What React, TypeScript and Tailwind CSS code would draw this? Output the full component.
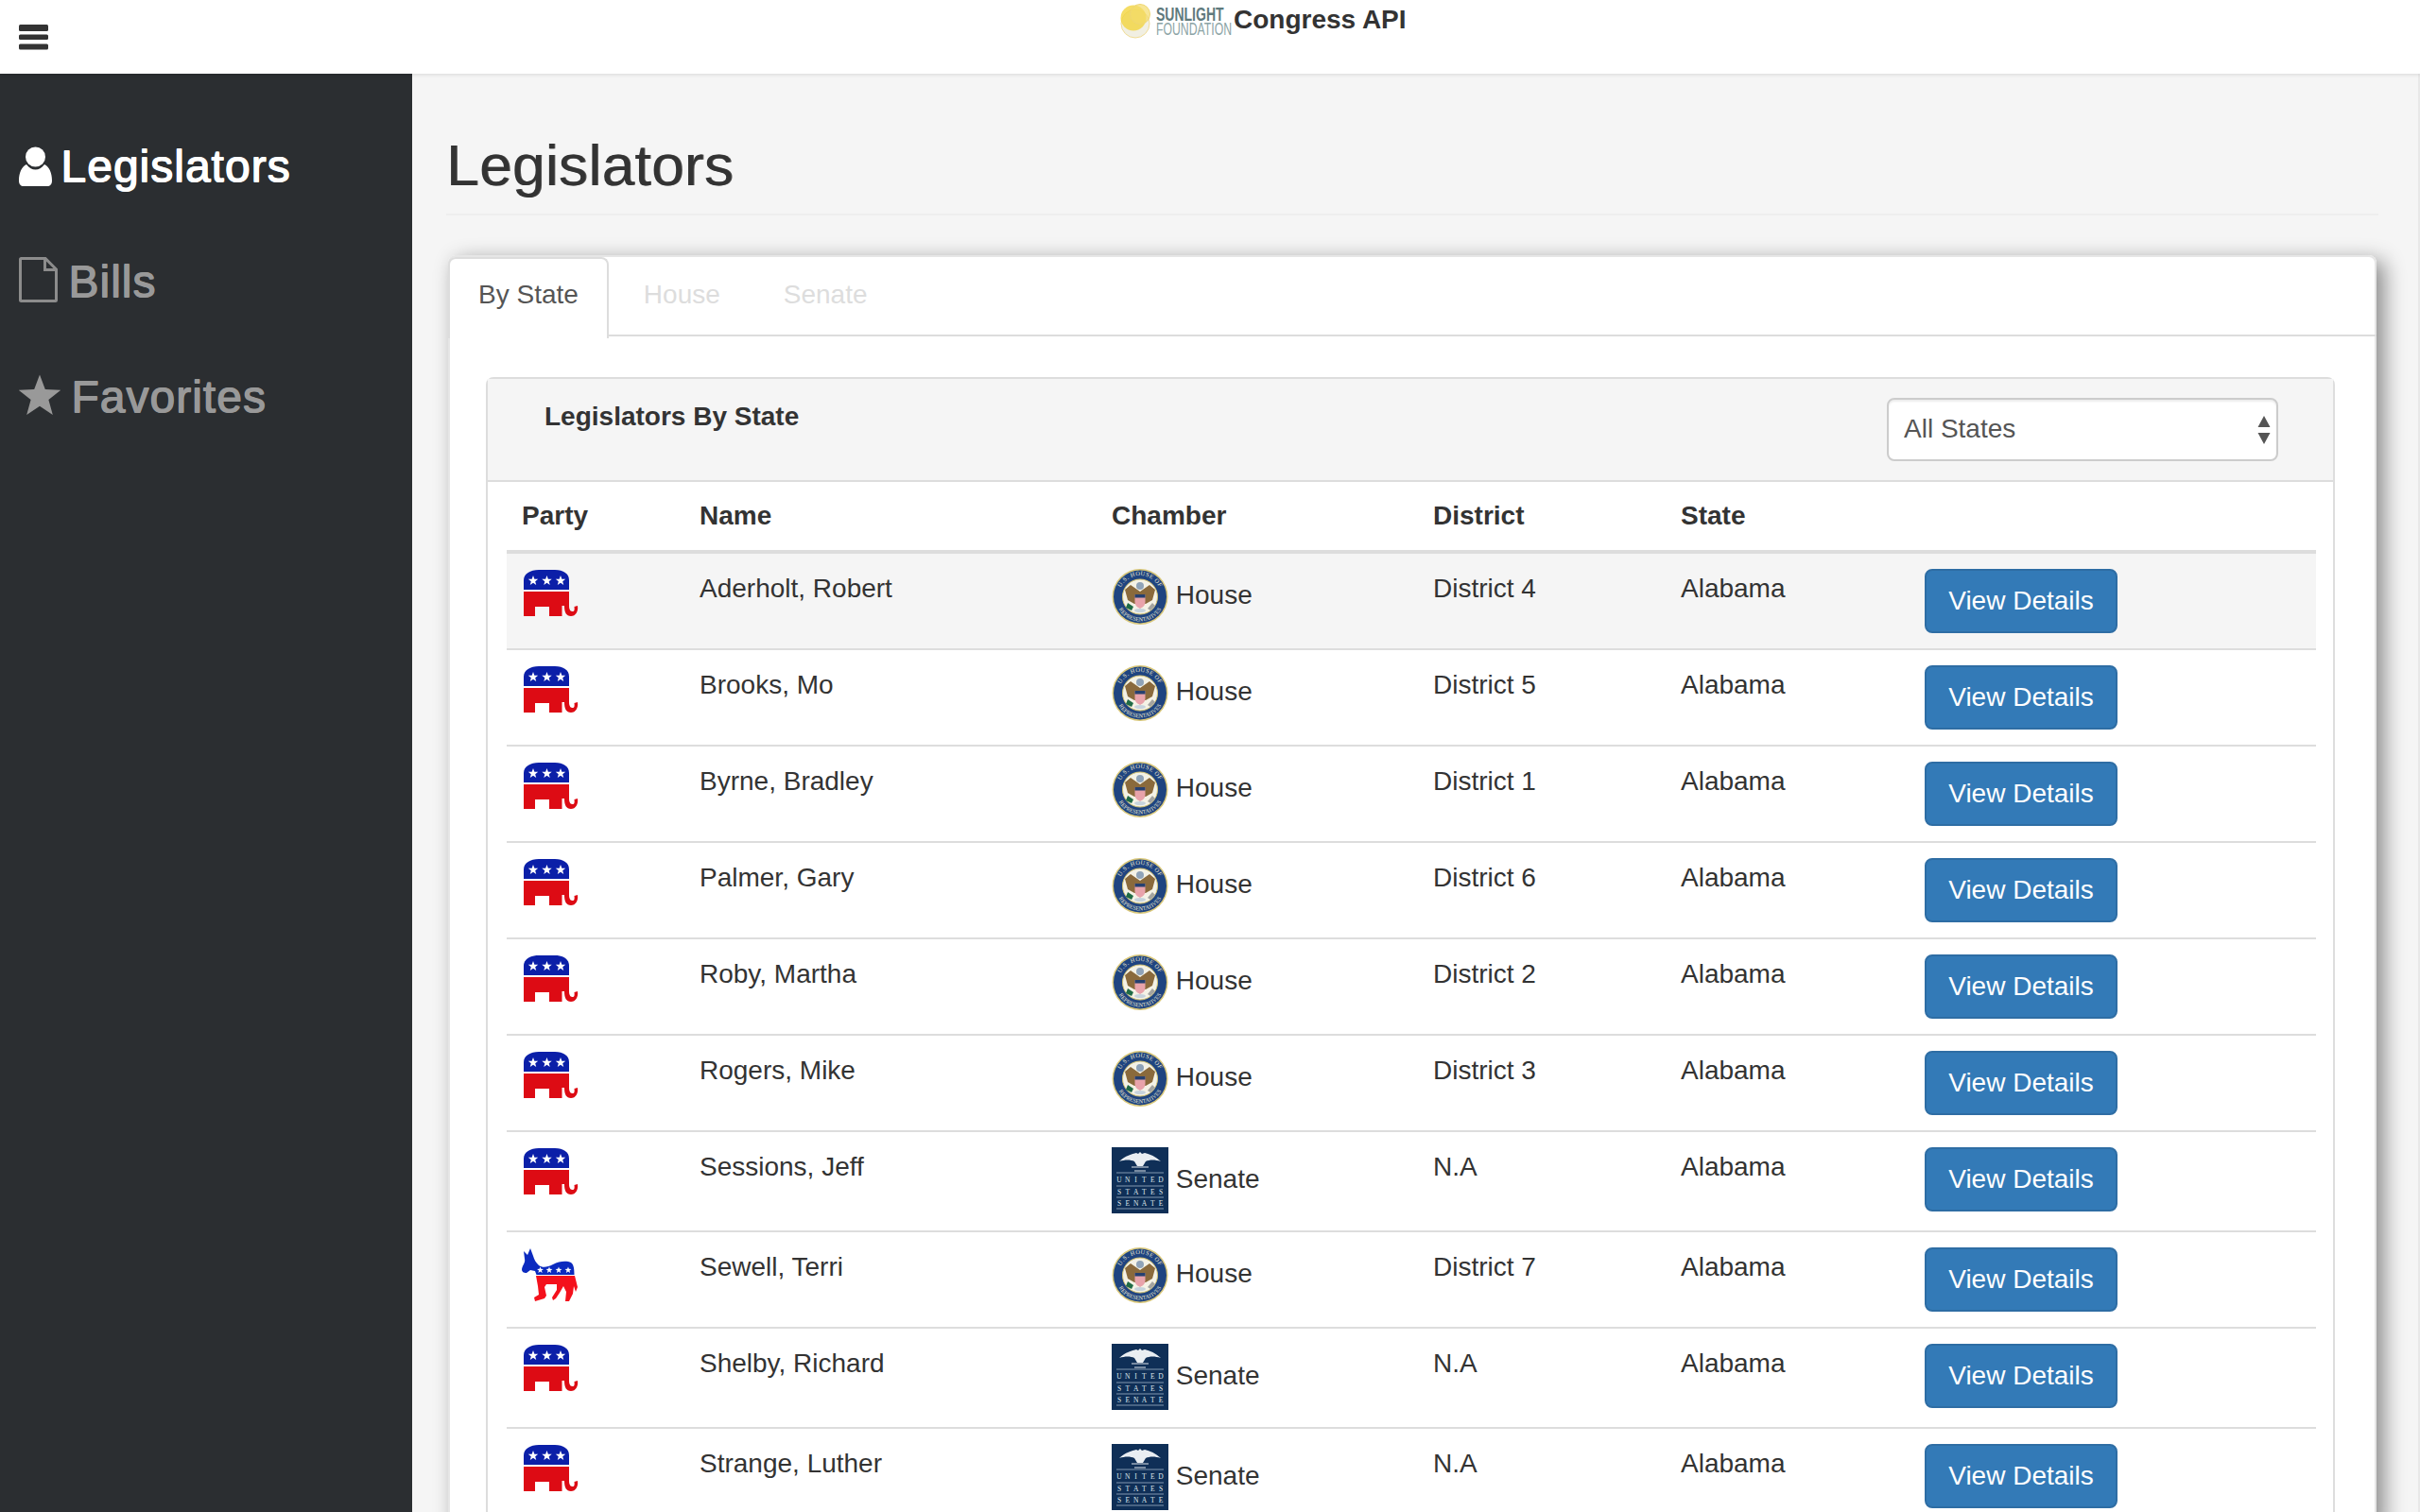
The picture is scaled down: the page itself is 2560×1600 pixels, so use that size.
import React from 'react';

type Party = 'R' | 'D';
type Chamber = 'House' | 'Senate';
type Legislator = { party: Party; name: string; chamber: Chamber; district: string };

const LEGISLATORS: Legislator[] = [
  { party: 'R', name: 'Aderholt, Robert', chamber: 'House', district: 'District 4' },
  { party: 'R', name: 'Brooks, Mo', chamber: 'House', district: 'District 5' },
  { party: 'R', name: 'Byrne, Bradley', chamber: 'House', district: 'District 1' },
  { party: 'R', name: 'Palmer, Gary', chamber: 'House', district: 'District 6' },
  { party: 'R', name: 'Roby, Martha', chamber: 'House', district: 'District 2' },
  { party: 'R', name: 'Rogers, Mike', chamber: 'House', district: 'District 3' },
  { party: 'R', name: 'Sessions, Jeff', chamber: 'Senate', district: 'N.A' },
  { party: 'D', name: 'Sewell, Terri', chamber: 'House', district: 'District 7' },
  { party: 'R', name: 'Shelby, Richard', chamber: 'Senate', district: 'N.A' },
  { party: 'R', name: 'Strange, Luther', chamber: 'Senate', district: 'N.A' },
];

const starPoints = (cx: number, cy: number, r: number) => {
  const pts: string[] = [];
  for (let i = 0; i < 10; i++) {
    const rad = i % 2 === 0 ? r : r * 0.42;
    const a = -Math.PI / 2 + (i * Math.PI) / 5;
    pts.push(`${(cx + rad * Math.cos(a)).toFixed(2)},${(cy + rad * Math.sin(a)).toFixed(2)}`);
  }
  return pts.join(' ');
};

const Elephant = () => (
  <svg width="60" height="60" viewBox="0 0 60 60" className="block">
    <g transform="translate(2 1)">
      <path d="M0 21V11C0 4 7 0 16 0H33C42 0 48 4 48 11V21Z" fill="#0b1fa8" />
      <path
        d="M0 23H48V38C48 43 50 44 52 44C53.500 44 54 42 53.500 39L57 38C58 44 55 49 50 49C45 49 43 45 43 38H40.500V49H27V39H12V49H0Z"
        fill="#dd0b14"
      />
      {[10, 24.500, 39].map((x) => (
        <polygon key={x} points={starPoints(x, 11.500, 5.500)} fill="#fff" />
      ))}
    </g>
  </svg>
);

const Donkey = () => (
  <svg width="60" height="60" viewBox="0 0 60 60" className="block">
    <g transform="translate(0 1)">
      <path
        d="M2 3L6 7L9 0L12 8C13 12 15 15 18 18C22 21 27 20 33 17C40 13 48 13 52 15C55 17 55.500 22 55.500 28H15.500L14 24L9 23L5 26C2 26 0 25 0 22C1 17 4 15 3 11Z"
        fill="#0b2abf"
      />
      <path
        d="M15 29H56L59 41L57 46L55 40L54 48L50 56H46L47 46L44 40L40 47L36 53L33 55L32 52L37 44L37 38H26L24 41L26 50L24 53L14 56L13 52L18 49L17 40Z"
        fill="#f4111c"
      />
      {[19.500, 29, 39, 49].map((x) => (
        <polygon key={x} points={starPoints(x, 23, 3.600)} fill="#fff" />
      ))}
    </g>
  </svg>
);

const HouseSeal = ({ id }: { id: string }) => (
  <svg width="60" height="60" viewBox="0 0 60 60" className="inline-block align-middle">
    <circle cx="30" cy="29.500" r="29.500" fill="#d9c779" />
    <circle cx="30" cy="29.500" r="28" fill="#1f4480" />
    <circle cx="30" cy="29.500" r="18.500" fill="#f4f2e6" stroke="#d8c56f" strokeWidth="1" />
    <defs>
      <path id={`${id}-top`} d="M7.500 29.500A22.500 22.500 0 0 1 52.500 29.500" />
      <path id={`${id}-bottom`} d="M4 29.500A26 26 0 0 0 56 29.500" />
    </defs>
    <text fontSize="6.500" fill="#e8e4cf" fontFamily='"Liberation Serif", serif' letterSpacing="0.400">
      <textPath href={`#${id}-top`} startOffset="50%" textAnchor="middle">
        U.S. HOUSE OF
      </textPath>
    </text>
    <text fontSize="6" fill="#e8e4cf" fontFamily='"Liberation Serif", serif'>
      <textPath href={`#${id}-bottom`} startOffset="50%" textAnchor="middle">
        REPRESENTATIVES
      </textPath>
    </text>
    <circle cx="30" cy="18" r="4" fill="#8fa3b8" />
    <path d="M30 24L20 17L14 22L17 33L24 37H36L43 33L46 22L40 17Z" fill="#8a6a3c" />
    <path d="M17 36L23 40L21 44L15 41Z" fill="#1f6b45" />
    <path d="M43 36L38 42L41 44L46 39Z" fill="#a4a4a0" />
    <path d="M24.500 27H35.500V35C35.500 39 32 41 30 42C28 41 24.500 39 24.500 35Z" fill="#e8a3ab" />
    <rect x="24.500" y="27" width="11" height="3.500" fill="#26406f" />
    <ellipse cx="30" cy="44" rx="6" ry="2" fill="#c6d3dd" />
  </svg>
);

const SenateSeal = () => (
  <svg width="60" height="70" viewBox="0 0 60 70" className="mb-[2px] inline-block align-middle">
    <rect width="60" height="70" fill="#0f2f57" />
    <path
      d="M8 15C14 9 22 7 26 6L28 7L30 5L32 7L35 6C40 7 47 10 52 15C46 13 40 13 36 15L33 20H27L24 15C20 13 14 13 8 15Z"
      fill="#e9eef2"
    />
    <path d="M21 21H39M24 25H36" stroke="#dfe6eb" strokeWidth="1.200" />
    <path d="M5 27H55M5 41H55M5 53H55M5 65H55" stroke="#9fb3c6" strokeWidth="0.800" />
    <g fill="#dfe6eb" fontFamily='"Liberation Serif", serif' fontSize="7.500" textAnchor="middle">
      {['UNITED', 'STATES', 'SENATE'].map((word, row) =>
        word.split('').map((c, i) => (
          <text key={`${row}-${i}`} x={8 + i * 8.800} y={37 + row * 12.500}>
            {c}
          </text>
        )),
      )}
    </g>
  </svg>
);

const Row = ({ item, index }: { item: Legislator; index: number }) => (
  <tr className={index === 0 ? 'bg-[#f5f5f5]' : 'border-t-2 border-[#ddd]'}>
    <td className="p-4 align-top">{item.party === 'R' ? <Elephant /> : <Donkey />}</td>
    <td className="p-4 pt-[17px] align-top">{item.name}</td>
    <td className="p-4 align-top">
      {item.chamber === 'House' ? <HouseSeal id={`seal-${index}`} /> : <SenateSeal />} {item.chamber}
    </td>
    <td className="p-4 pt-[17px] align-top">{item.district}</td>
    <td className="p-4 pt-[17px] align-top">Alabama</td>
    <td className="p-4 align-top">
      <button className="block h-[68px] w-[204px] rounded-lg border-2 border-[#2e6da4] bg-[#337ab7] text-[28px] leading-10 text-white">
        View Details
      </button>
    </td>
  </tr>
);

export default function App() {
  return (
    <div className="flex h-screen flex-col overflow-hidden bg-[#f5f5f5] font-['Liberation_Sans',Arial,sans-serif] text-[28px] leading-10 text-[#333]">
      {/* Top bar */}
      <header className="relative z-10 flex h-[78px] shrink-0 items-start bg-white shadow-[0_1px_4px_rgba(0,0,0,0.12)]">
        <svg width="32" height="28" viewBox="0 0 32 28" className="ml-5 mt-[25px] fill-[#333]">
          <rect x="0" y="1" width="31" height="7" rx="1.500" />
          <rect x="0" y="11.500" width="31" height="5.500" rx="1.500" />
          <rect x="0" y="21.500" width="31" height="6" rx="1.500" />
        </svg>
        <div className="ml-[1133px] flex items-start">
          <svg width="32" height="38" viewBox="0 0 32 38" className="mt-[4px]">
            <circle cx="16" cy="21" r="15" fill="#f1efe2" stroke="#f0dc95" />
            <circle cx="14" cy="15" r="13.500" fill="#f3d43f" fillOpacity="0.800" />
            <circle cx="21" cy="11" r="10.500" fill="#f3dc6a" fillOpacity="0.700" stroke="#efd772" />
          </svg>
          <div className="ml-[6px] mt-[7px] w-[80px] leading-none">
            <div className="origin-left scale-x-[0.7] whitespace-nowrap text-[20px] font-bold leading-[16px] text-[#5f7a7d]">SUNLIGHT</div>
            <div className="origin-left scale-x-[0.68] whitespace-nowrap text-[18px] leading-[16px] text-[#8ba3a5]">FOUNDATION</div>
          </div>
          <div className="ml-[2px] mt-[1px] text-[28px] font-bold leading-10">Congress API</div>
        </div>
      </header>

      <div className="flex min-h-0 flex-1">
        {/* Sidebar */}
        <aside className="w-[436px] shrink-0 bg-[#2b2e31] pl-5 pt-[37px] text-[48px] tracking-[1px] [text-shadow:1px_0_currentColor,0_1px_currentColor,1px_1px_currentColor]">
          <div className="flex h-[122px] items-center gap-[9px] text-white">
            <svg width="35" height="42" viewBox="0 0 35 42" className="fill-white">
              <circle cx="17.500" cy="11" r="10.500" />
              <path d="M0 36C0 28 3 21 8 19C11 23 14 24.500 17.500 24.500C21 24.500 24 23 27 19C32 21 35 28 35 36C35 40 33 42 30 42H5C2 42 0 40 0 36Z" />
            </svg>
            <span>Legislators</span>
          </div>
          <div className="flex h-[122px] items-center gap-[11px] text-[#999]">
            <svg width="41" height="48" viewBox="0 0 41 48" fill="none" stroke="#8c8c8c" strokeWidth="3" className="-mt-1">
              <path d="M1.500 2.500C1.500 2 2 1.500 2.500 1.500H28L39.500 13V45.500C39.500 46 39 46.500 38.500 46.500H2.500C2 46.500 1.500 46 1.500 45.500Z" />
              <path d="M27.500 1.500V13.500H39.500" />
            </svg>
            <span>Bills</span>
          </div>
          <div className="flex h-[122px] items-center gap-[11px] text-[#999]">
            <svg width="44" height="44" viewBox="0 0 44 44" className="-mt-1 fill-[#999]">
              <polygon points={starPoints(22, 24, 23.500)} />
            </svg>
            <span>Favorites</span>
          </div>
        </aside>

        {/* Main */}
        <main className="min-w-0 flex-1 pl-9 pr-[42px] pt-[62px]">
          <h1 className="border-b-2 border-[#eee] pb-4 text-[62px] leading-[70px] tracking-[0.4px] [text-shadow:1px_0_rgba(51,51,51,0.8)]">Legislators</h1>

          <section className="mx-[2px] mt-[42px] rounded-lg bg-white shadow-[8px_6px_22px_rgba(0,0,0,0.44),inset_0_0_0_2px_#e6e6e6]">
            <nav className="flex h-[86px] border-b-2 border-[#ddd] pt-[2px]">
              <a className="-mb-[2px] mr-[7px] h-[86px] rounded-t-lg border-2 border-b-0 border-[#ddd] bg-white pl-[30px] pr-[30px] pt-[18px] text-[#555]">By State</a>
              <a className="mr-[7px] px-[30px] pt-5 text-[#ddd]">House</a>
              <a className="px-[30px] pt-5 text-[#ddd]">Senate</a>
            </nav>

            <div className="pl-10 pr-[44px] pt-[43px]">
              <div className="rounded-t-lg border-2 border-b-0 border-[#ddd]">
                <div className="flex h-[109px] items-start justify-between border-b-2 border-[#ddd] bg-[#f5f5f5] pl-[60px] pr-[58px] pt-[20px]">
                  <h3 className="font-bold">Legislators By State</h3>
                  <div className="relative">
                    <select className="h-[67px] w-[414px] appearance-none rounded-lg border-2 border-[#ccc] bg-white pb-[2px] pl-4 text-[28px] text-[#555] shadow-[inset_0_2px_2px_rgba(0,0,0,0.075)]">
                      <option>All States</option>
                    </select>
                    <svg width="14" height="32" viewBox="0 0 14 32" className="absolute right-[8px] top-[18px] fill-[#555]">
                      <path d="M7 1L13.500 13H.5ZM7 31L.5 19H13.500Z" />
                    </svg>
                  </div>
                </div>
                <div className="pl-5 pr-[18px]">
                  <table className="w-[1914px] table-fixed">
                    <colgroup>
                      <col className="w-[188px]" />
                      <col className="w-[436px]" />
                      <col className="w-[340px]" />
                      <col className="w-[262px]" />
                      <col className="w-[258px]" />
                      <col className="w-[430px]" />
                    </colgroup>
                    <thead>
                      <tr className="border-b-4 border-[#ddd] text-left">
                        <th className="p-4 font-bold">Party</th>
                        <th className="p-4 font-bold">Name</th>
                        <th className="p-4 font-bold">Chamber</th>
                        <th className="p-4 font-bold">District</th>
                        <th className="p-4 font-bold">State</th>
                        <th className="p-4" />
                      </tr>
                    </thead>
                    <tbody>
                      {LEGISLATORS.map((item, i) => (
                        <Row key={item.name} item={item} index={i} />
                      ))}
                    </tbody>
                  </table>
                </div>
              </div>
            </div>
          </section>
        </main>
        <div className="w-[2px] shrink-0 bg-[#e8e8e8]" />
      </div>
    </div>
  );
}
